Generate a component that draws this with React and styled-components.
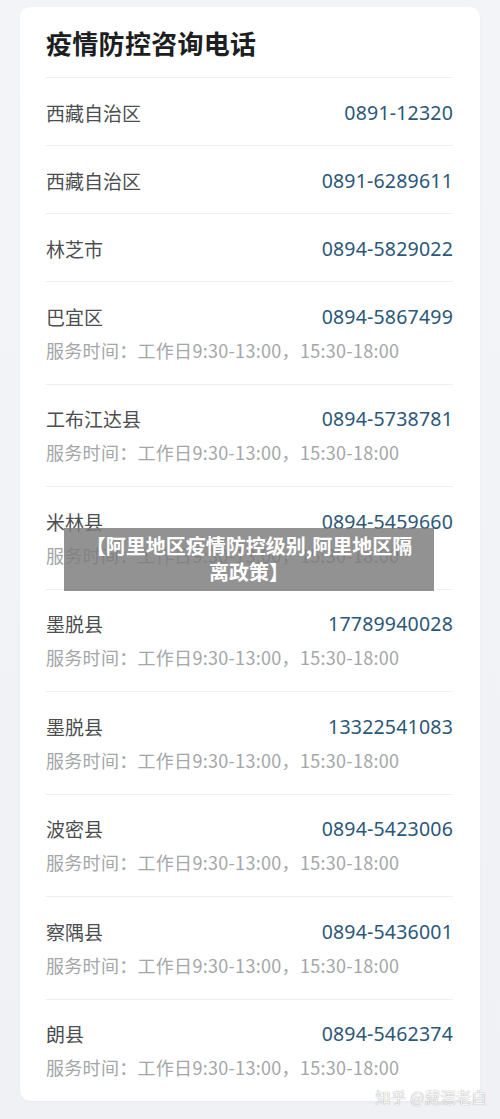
import React from "react";
import styled, { createGlobalStyle } from "styled-components";

const Global = createGlobalStyle`
  html, body { margin: 0; padding: 0; background: #f1f2f5; }
  body { font-family: "Noto Sans", "Noto Sans CJK SC", sans-serif; }
`;

const Page = styled.div`
  position: relative;
  width: 500px;
  height: 1119px;
  padding: 7px 20px 0;
  box-sizing: border-box;
  background: linear-gradient(180deg, #f3f4f7 0%, #f0f1f4 100%);
  overflow: hidden;
`;

const Card = styled.div`
  background: #ffffff;
  border-radius: 10px;
  box-shadow: 0 1px 3px rgba(0, 0, 0, 0.03);
  padding: 0 27px 0 26px;
`;

const Title = styled.h1`
  margin: 0;
  padding: 20px 0 18px;
  font-family: "Noto Sans CJK SC", sans-serif;
  font-size: 26px;
  line-height: 32px;
  font-weight: 700;
  color: #1c1e21;
  letter-spacing: 0.3px;
`;

const Row = styled.div`
  border-top: 1px solid #eeeff1;
  padding: 22.5px 0 20.5px;
  display: flex;
  flex-direction: column;
  gap: 9px;
`;

const Line = styled.div`
  display: flex;
  justify-content: space-between;
  align-items: center;
  height: 24px;
`;

const Name = styled.span`
  font-family: "Noto Sans CJK SC", sans-serif;
  font-size: 19px;
  line-height: 24px;
  color: #4b4d50;
`;

const Phone = styled.span`
  font-family: "Noto Sans", "Noto Sans CJK SC", sans-serif;
  font-size: 19.5px;
  line-height: 24px;
  letter-spacing: 0.2px;
  color: #2c5778;
`;

const Hours = styled.div`
  font-family: "Noto Sans CJK SC", sans-serif;
  font-size: 18px;
  line-height: 25.5px;
  letter-spacing: 0.3px;
  color: #a4a6a9;
  white-space: nowrap;
`;

const Banner = styled.div`
  position: absolute;
  left: 64px;
  top: 528px;
  width: 370px;
  height: 63px;
  box-sizing: border-box;
  padding-top: 5px;
  background: rgba(122, 122, 122, 0.82);
  color: #ffffff;
  text-align: center;
  font-family: "Noto Sans CJK SC", sans-serif;
  font-weight: 700;
  font-size: 20px;
  line-height: 26px;
`;

const Watermark = styled.div`
  position: absolute;
  right: 13px;
  bottom: 12px;
  font-family: "Noto Sans CJK SC", sans-serif;
  font-size: 15px;
  line-height: 20px;
  letter-spacing: 0.5px;
  color: rgba(255, 255, 255, 0.92);
  text-shadow: 0 0 1px rgba(140, 140, 140, 0.7), 0 0 1px rgba(140, 140, 140, 0.5);
`;

const HOURS = "服务时间：工作日9:30-13:00，15:30-18:00";

const data = [
  { name: "西藏自治区", phone: "0891-12320" },
  { name: "西藏自治区", phone: "0891-6289611" },
  { name: "林芝市", phone: "0894-5829022" },
  { name: "巴宜区", phone: "0894-5867499", hours: true },
  { name: "工布江达县", phone: "0894-5738781", hours: true },
  { name: "米林县", phone: "0894-5459660", hours: true },
  { name: "墨脱县", phone: "17789940028", hours: true },
  { name: "墨脱县", phone: "13322541083", hours: true },
  { name: "波密县", phone: "0894-5423006", hours: true },
  { name: "察隅县", phone: "0894-5436001", hours: true },
  { name: "朗县", phone: "0894-5462374", hours: true },
];

export default function App() {
  return (
    <>
      <Global />
      <Page>
        <Card>
          <Title>疫情防控咨询电话</Title>
          {data.map((d, i) => (
            <Row key={i}>
              <Line>
                <Name>{d.name}</Name>
                <Phone>{d.phone}</Phone>
              </Line>
              {d.hours && <Hours>{HOURS}</Hours>}
            </Row>
          ))}
        </Card>
        <Banner>
          【阿里地区疫情防控级别,阿里地区隔
          <br />
          离政策】
        </Banner>
        <Watermark>知乎 @藏漂老白</Watermark>
      </Page>
    </>
  );
}
